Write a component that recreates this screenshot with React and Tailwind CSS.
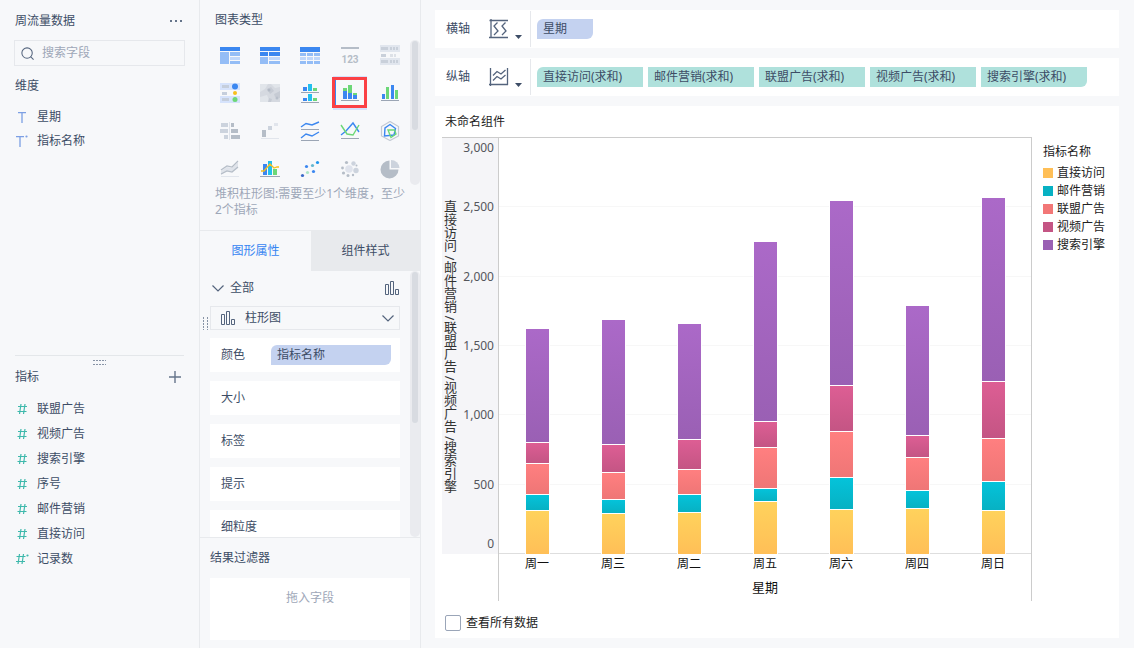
import React, { useState } from 'react';
import clsx from 'clsx';

const dimensions = [
  { name: "星期", calculated: false },
  { name: "指标名称", calculated: true },
];

const measures = [
  { name: "联盟广告", calculated: false },
  { name: "视频广告", calculated: false },
  { name: "搜索引擎", calculated: false },
  { name: "序号", calculated: false },
  { name: "邮件营销", calculated: false },
  { name: "直接访问", calculated: false },
  { name: "记录数", calculated: true },
];

const series = [
  { name: "直接访问", swatch: "bg-[#ffbf57]", fill: "bg-linear-to-b from-[#ffd25c] to-[#ffbf57]" },
  { name: "邮件营销", swatch: "bg-[#07b1c3]", fill: "bg-linear-to-b from-[#04c3da] to-[#07b1c3]" },
  { name: "联盟广告", swatch: "bg-[#f27777]", fill: "bg-linear-to-b from-[#ff7f80] to-[#ef7676]" },
  { name: "视频广告", swatch: "bg-[#c45584]", fill: "bg-linear-to-b from-[#dd5e94] to-[#c45584]" },
  { name: "搜索引擎", swatch: "bg-[#9a60b4]", fill: "bg-linear-to-b from-[#ab69c8] to-[#9a60b4]" },
];

// values are in the same order as series
const days = [
  { label: "周一", values: [315, 120, 220, 152, 823] },
  { label: "周三", values: [297, 101, 191, 201, 905] },
  { label: "周二", values: [302, 130, 180, 215, 838] },
  { label: "周五", values: [382, 96, 293, 187, 1298] },
  { label: "周六", values: [324, 230, 331, 331, 1336] },
  { label: "周四", values: [331, 129, 240, 156, 938] },
  { label: "周日", values: [316, 209, 309, 413, 1325] },
];

const MAX = 3000;
const ticks = ["3,000", "2,500", "2,000", "1,500", "1,000", "500", "0"];

const chartTypes = [
  {
    name: "分组表",
    icon: (
      <>
        <path fill="#3b87f0" d="M0 2h20v4H0z" />
        <path fill="#94bdf6" d="M0 7h9v12H0zM10 7h10v4H10zM10 16h10v3H10z" />
        <path fill="#c0d7fa" d="M10 12h10v3H10z" />
      </>
    ),
  },
  {
    name: "交叉表",
    icon: (
      <>
        <path fill="#3b87f0" d="M0 2h20v4H0zM0 7h8v4H0zM9 7h11v4H9z" />
        <path fill="#94bdf6" d="M0 12h8v7H0zM9 16h11v3H9z" />
        <path fill="#c0d7fa" d="M9 12h11v3H9z" />
      </>
    ),
  },
  {
    name: "明细表",
    icon: (
      <>
        <path fill="#3b87f0" d="M0 2h20v5H0z" />
        <path fill="#94bdf6" d="M0 8h6v3H0zM7 8h6v3H7zM14 8h6v3h-6zM0 16h6v3H0zM7 16h6v3H7zM14 16h6v3h-6z" />
        <path fill="#c0d7fa" d="M0 12h6v3H0zM7 12h6v3H7zM14 12h6v3h-6z" />
      </>
    ),
  },
  {
    name: "KPI指标卡",
    icon: (
      <>
        <path fill="#b5bdc7" d="M1 2h18v2H1z" />
        <text
          x="10"
          y="18"
          textAnchor="middle"
          fill="#b5bdc7"
          className="font-['Roboto',sans-serif] text-[10px] font-bold"
        >
          123
        </text>
      </>
    ),
  },
  {
    name: "颜色表格",
    icon: (
      <>
        <path fill="#e1e6ee" d="M0 0h20v7H0zM0 13h20v7H0z" />
        <path fill="#c9d0da" d="M1 2h7v3H1zM1 9h5v3H1zM1 15h7v3H1zM10 2h2v3h-2zM13 2h2v3h-2zM16 2h2v3h-2zM10 15h2v3h-2zM13 15h2v3h-2zM16 15h2v3h-2z" />
        <path fill="#dde1e7" d="M10 9h3v3h-3zM14 9h2v3h-2z" />
      </>
    ),
  },
  {
    name: "散点图",
    icon: (
      <>
        <path fill="#d6e3fc" d="M0 0h20v7H0zM0 13h20v7H0z" />
        <path fill="#c5cedc" d="M2 2h7v3H2zM2 9h5v3H2zM2 15h7v3H2z" />
        <circle cx="15" cy="3.500" r="3" fill="#3b87f0" />
        <circle cx="15" cy="10" r="2" fill="#f7bf1e" />
        <circle cx="15" cy="16.500" r="2.500" fill="#6cd777" />
      </>
    ),
  },
  {
    name: "热力区域图",
    icon: (
      <>
        <path fill="#d5d9e0" d="M0 1h20v18H0z" />
        <path fill="#e1e5ea" d="M0 1h8l-3 5-5 3zM11 1h9v3l-5 1zM0 14l7-2 3 7H0z" />
        <path fill="#c6cbd4" d="M7 6l4-2 3 4-4 3zM14 11l6-3v7l-5-1zM9 15l3 1-1 3H8z" />
        <circle cx="9" cy="7" r="1.500" fill="#b3bac5" />
        <circle cx="17" cy="15" r="1.500" fill="#b8bfca" />
      </>
    ),
  },
  {
    name: "多系列柱形图",
    icon: (
      <>
        <path fill="#3b87f0" d="M3 4h4v4H3zM3 15h4v3H3z" />
        <path fill="#22bfee" d="M8 1h4v7H8zM8 11h4v7H8z" />
        <path fill="#6cd777" d="M13 5h4v3h-4zM13 15h4v3h-4z" />
        <path fill="#9ba5b4" d="M1 9h18v1H1zM1 19h18v1H1z" />
      </>
    ),
  },
  {
    name: "堆积柱形图",
    selected: true,
    icon: (
      <>
        <path fill="#6cd777" d="M3 5h4v3H3zM8 2h4v8H8zM13 10h4v2h-4z" />
        <path fill="#3b87f0" d="M3 8h4v8H3zM8 10h4v6H8zM13 12h4v4h-4z" />
        <path fill="#9ba5b4" d="M1 17h18v1H1z" />
      </>
    ),
  },
  {
    name: "对比柱形图",
    icon: (
      <>
        <path fill="#3b87f0" d="M2 11h3v5H2zM11 2h3v14h-3z" />
        <path fill="#6cd777" d="M6 4h3v12H6zM15 7h3v9h-3z" />
        <path fill="#9ba5b4" d="M1 17h18v1H1z" />
      </>
    ),
  },
  {
    name: "对比条形图",
    icon: (
      <>
        <path fill="#ccd3dd" d="M1 2h7v4H1zM0 8h8v4H0zM4 14h4v4H4z" />
        <path fill="#b5bdc7" d="M11 2h3v4h-3zM11 8h7v4h-7zM11 14h9v4h-9z" />
        <path fill="#dfe3ea" d="M9 1h1v18H9z" />
      </>
    ),
  },
  {
    name: "瀑布图",
    icon: (
      <>
        <path fill="#b5bdc7" d="M2 9h4v7H2z" />
        <path fill="#ccd3dd" d="M8 5h4v4H8z" />
        <path fill="#e1e5ec" d="M14 2h4v3h-4zM1 17h18v1H1z" />
      </>
    ),
  },
  {
    name: "多系列折线图",
    icon: (
      <>
        <path fill="none" stroke="#3b87f0" strokeWidth="1.400" d="M1 6l5-3.500 6 1.500 7-3M1 17l5-4 6 2 7-4" />
        <path fill="#9ba5b4" d="M1 8h18v1H1zM1 19h18v1H1z" />
      </>
    ),
  },
  {
    name: "范围折线图",
    icon: (
      <>
        <path fill="none" stroke="#3b87f0" strokeWidth="1.400" d="M1 14l5-4 7-8 6 9" />
        <path fill="none" stroke="#6cd777" strokeWidth="1.400" d="M1 4l6 9 6 1 6-10" />
        <path fill="#9ba5b4" d="M1 17h18v1H1z" />
      </>
    ),
  },
  {
    name: "雷达图",
    icon: (
      <g fill="none">
        <path stroke="#c3c9d3" strokeWidth="1.200" d="M10 .5l8.500 5v9.500L10 19.500 1.500 15V5.500z" />
        <path stroke="#3b87f0" strokeWidth="1.400" d="M10 3.500l5.500 4-1.500 6.500-9.500 1 .5-8z" />
        <path stroke="#6cd777" strokeWidth="1.400" d="M8 9h6.500l1.500 4-5 3.500z" />
      </g>
    ),
  },
  {
    name: "面积图",
    icon: (
      <>
        <path fill="#dfe3ea" d="M1 12l6-4 5 1 6-6v6l-6 4-5-1-6 4z" />
        <path fill="none" stroke="#b5bdc7" strokeWidth="1.200" d="M1 11l6-4 5 1 6-6M1 15l6-3 5 1 6-5" />
        <path fill="#e1e5ec" d="M1 17h18v1H1z" />
      </>
    ),
  },
  {
    name: "组合图",
    icon: (
      <>
        <path fill="#3b87f0" d="M3 5h4v11H3z" />
        <path fill="#22bfee" d="M8 2h4v14H8z" />
        <path fill="#6cd777" d="M13 10h4v6h-4z" />
        <path fill="none" stroke="#f7bf1e" strokeWidth="1.300" d="M1 12h3l6-7 4 4 3-1 2 0" />
        <path fill="#9ba5b4" d="M0 17h20v1H0z" />
      </>
    ),
  },
  {
    name: "聚合散点图",
    icon: (
      <>
        <circle cx="2.500" cy="16.500" r="1.600" fill="#3a69c9" />
        <circle cx="6.500" cy="7.500" r="1.600" fill="#3b87f0" />
        <circle cx="7.500" cy="13.500" r="1.600" fill="#abe5c5" />
        <circle cx="12.500" cy="6.500" r="1.600" fill="#64b7d0" />
        <circle cx="13.500" cy="12.500" r="1.600" fill="#3b87f0" />
        <circle cx="17.500" cy="3.500" r="1.600" fill="#1e96ee" />
      </>
    ),
  },
  {
    name: "聚合气泡图",
    icon: (
      <>
        <circle cx="9" cy="10" r="3.800" fill="#dfe3ec" />
        <circle cx="13.500" cy="4.500" r="2.200" fill="#ccd3dd" />
        <circle cx="16" cy="11.500" r="2.700" fill="#ccd3dd" />
        <g fill="#b5bdc7">
          <circle cx="6.500" cy="3.500" r="1.600" />
          <circle cx="2.500" cy="9" r="1.400" />
          <circle cx="3.500" cy="14" r="1.600" />
          <circle cx="8" cy="16.500" r="1.500" />
          <circle cx="13" cy="16" r="1.200" />
          <circle cx="16.500" cy="6.500" r="1" />
        </g>
      </>
    ),
  },
  {
    name: "饼图",
    icon: (
      <>
        <path fill="#b5bdc7" d="M9.500 1.500v9h9a9 9 0 1 1-9-9z" />
        <path fill="#ccd3dd" d="M11 1a8.500 8.500 0 0 1 8.500 8H11z" />
      </>
    ),
  },
];

const Grip = ({ className }) => (
  <svg width="13" height="5" viewBox="0 0 13 5" className={className} aria-hidden="true">
    <path stroke="#8793a5" strokeWidth="1" strokeDasharray="2 1" d="M0 .5h13M0 4.500h13" />
  </svg>
);

const ColumnIcon = () => (
  <svg width="16" height="16" viewBox="0 0 16 16" fill="none" stroke="#54647d" aria-hidden="true">
    <path d="M1.500 4.500h3v10h-3zM6.500 1.500h3v13h-3zM11.500 9.500h3v5h-3z" />
  </svg>
);

const ChevronIcon = () => (
  <svg width="12" height="12" viewBox="0 0 12 12" fill="none" stroke="#54647d" strokeWidth="1.200" aria-hidden="true">
    <path d="M.5 3.500L6 9l5.500-5.500" />
  </svg>
);

const TextFieldIcon = ({ calculated }) => (
  <svg width="14" height="14" viewBox="0 0 14 14" aria-hidden="true">
    <path fill="none" stroke="#7c9fe4" strokeWidth="1.300" d={calculated ? "M1 2.600h8M5 2.600V13" : "M3 2.600h8M7 2.600V13"} />
    {calculated && <circle cx="11.500" cy="2.500" r="1.100" fill="#7c9fe4" />}
  </svg>
);

const NumberFieldIcon = ({ calculated }) => (
  <svg width="14" height="14" viewBox="0 0 14 14" aria-hidden="true">
    <g fill="none" stroke="#3fb9ac" transform={calculated ? "translate(-1.500 0)" : undefined}>
      <path strokeWidth="1.200" d="M3 4.500h9M2.500 9.500h9" />
      <path strokeWidth="1.200" d="M6 2L4.500 12M10 2L8.500 12" />
    </g>
    {calculated && <circle cx="12.500" cy="3.500" r="1.100" fill="#3fb9ac" />}
  </svg>
);

const Scrollbar = ({ thumb }) => (
  <div className="w-[10px] shrink-0 rounded-full bg-[#eaebef] px-[2px] pt-[1px]">
    <div className={clsx("rounded-full bg-[#d8dbe1]", thumb)} />
  </div>
);

const FieldsPanel = () => (
  <aside className="flex w-[200px] shrink-0 flex-col border-r border-[#e8eaed] px-[15px]">
    <div className="flex h-[55%] shrink-0 flex-col border-b border-[#e4e7ea]">
      <div className="flex h-10 items-center justify-between pt-px pr-[2px]">
        <h2>周流量数据</h2>
        <button type="button" aria-label="更多">
          <svg width="12" height="4" viewBox="0 0 12 4" fill="#65748a">
            <path d="M0 1h2v2H0zM5 1h2v2H5zM10 1h2v2h-2z" />
          </svg>
        </button>
      </div>
      <label className="-mx-px flex h-[26px] shrink-0 items-center gap-2 border border-[#e6e8ec] px-[6px]">
        <svg width="15" height="15" viewBox="0 0 15 15" fill="none" stroke="#54647d" strokeWidth="1.200">
          <circle cx="7" cy="7" r="6" />
          <path d="M11 11l3.500 3.500" />
        </svg>
        <input
          type="text"
          aria-label="搜索字段"
          placeholder="搜索字段"
          className="w-full bg-transparent placeholder-[#9ea7b8] focus:outline-none"
        />
      </label>
      <h3 className="flex h-[39px] items-center">维度</h3>
      <ul>
        {dimensions.map((f) => (
          <li key={f.name} className="flex h-6 items-center gap-2">
            <TextFieldIcon calculated={f.calculated} />
            {f.name}
          </li>
        ))}
      </ul>
    </div>
    <Grip className="mt-1 shrink-0 self-center" />
    <div className="mb-[7px] flex h-6 items-center justify-between pr-[3px]">
      <h3>指标</h3>
      <button type="button" aria-label="添加指标">
        <svg width="12" height="12" viewBox="0 0 12 12" stroke="#65748a" strokeWidth="1.400">
          <path d="M6 0v12M0 6h12" />
        </svg>
      </button>
    </div>
    <ul>
      {measures.map((f) => (
        <li key={f.name} className="flex h-[25px] items-center gap-2">
          <NumberFieldIcon calculated={f.calculated} />
          {f.name}
        </li>
      ))}
    </ul>
  </aside>
);

const ChartPanel = () => {
  const [tab, setTab] = useState("图形属性");

  return (
    <section className="flex w-[221px] shrink-0 flex-col border-r border-[#e8eaed]">
      <h2 className="flex h-10 shrink-0 items-center pl-[15px]">图表类型</h2>
      <div className="flex h-[145px] shrink-0 justify-between">
        <div className="grid grid-cols-5 content-start gap-x-5 gap-y-[18px] pt-[5px] pl-5">
          {chartTypes.map((type) => (
            <button key={type.name} type="button" aria-label={type.name} className="relative size-5">
              {type.selected && (
                <>
                  <span className="absolute -inset-[7px] bg-[#d5e2fb]" />
                  <span className="absolute -inset-[5px] border border-[#3b87f0] bg-[#f7f8fa]" />
                  <span className="absolute -top-[6px] -right-[7px] -bottom-[5px] -left-2 border-3 border-[#fb4145]" />
                </>
              )}
              <svg width="20" height="20" viewBox="0 0 20 20" className="relative">
                {type.icon}
              </svg>
            </button>
          ))}
        </div>
        <Scrollbar thumb="h-[89px]" />
      </div>
      <p className="h-[45px] shrink-0 pt-px pr-[10px] pl-[15px] leading-4 text-[#9ea7b8]">
        堆积柱形图:需要至少1个维度，至少2个指标
      </p>

      <div className="grid h-[41px] shrink-0 grid-cols-[111px_1fr] border-t border-[#e8eaed]">
        {["图形属性", "组件样式"].map((name) => (
          <button
            key={name}
            type="button"
            onClick={() => setTab(name)}
            className={tab === name ? "text-[#3685f2]" : "bg-[#e8eaed]"}
          >
            {name}
          </button>
        ))}
      </div>

      <div className="flex min-h-0 flex-1">
        <div className="flex flex-1 flex-col overflow-hidden pr-[10px]">
          <div className="flex h-[34px] shrink-0 items-center gap-[6px] pl-3">
            <ChevronIcon />
            <span className="flex-1">全部</span>
            <ColumnIcon />
          </div>
          <div className="flex items-center gap-[2px] pl-[3px]">
            <svg width="5" height="13" viewBox="0 0 5 13" className="mt-3" aria-hidden="true">
              <path stroke="#8793a5" strokeDasharray="2 1" d="M.5 0v13M4.500 0v13" />
            </svg>
            <div className="relative flex-1">
              <select
                aria-label="图形类型"
                className="block h-6 w-full appearance-none border border-[#e6e8ec] bg-transparent pl-[34px] focus:outline-none"
              >
                <option>柱形图</option>
                <option>点</option>
                <option>线</option>
              </select>
              <span className="pointer-events-none absolute inset-y-0 left-[10px] flex items-center">
                <ColumnIcon />
              </span>
              <span className="pointer-events-none absolute inset-y-0 right-[6px] flex items-center">
                <ChevronIcon />
              </span>
            </div>
          </div>
          <div className="mt-2 flex flex-col gap-[9px] pl-[10px]">
            <div className="flex h-[34px] shrink-0 items-center justify-between bg-white pr-[9px] pl-[11px]">
              颜色
              <span className="h-5 w-[120px] rounded-tl-md rounded-br-md bg-[#c4d2f0] pl-[6px] leading-5">
                指标名称
              </span>
            </div>
            {["大小", "标签", "提示", "细粒度"].map((name) => (
              <div key={name} className="flex h-[34px] shrink-0 items-center bg-white pl-[11px]">
                {name}
              </div>
            ))}
          </div>
        </div>
        <Scrollbar thumb="h-[151px]" />
      </div>

      <div className="shrink-0 border-t border-[#e8eaed] px-[10px] pb-2">
        <h3 className="flex h-10 items-center">结果过滤器</h3>
        <div className="h-[62px] bg-white pt-[10px] text-center leading-5 text-[#9ea7b8]">拖入字段</div>
      </div>
    </section>
  );
};

const AxisRow = ({ name, icon, children }) => (
  <div className="flex h-[38px] shrink-0 items-center bg-white">
    <span className="w-[54px] pl-[11px]">{name}</span>
    <button type="button" aria-label={name + "类型"} className="flex items-end gap-[6px]">
      {icon}
      <svg width="7" height="4" viewBox="0 0 7 4" fill="#3d4d66">
        <path d="M0 0h7L3.500 4z" />
      </svg>
    </button>
    <div className="ml-2 flex h-9 flex-1 items-center gap-[5px] border-l border-[#e6e8ec] pl-[6px] leading-5">
      {children}
    </div>
  </div>
);

const StackedChart = () => (
  <div className="flex flex-1 flex-col">
    <div className="flex flex-1 border-t border-[#ccc] text-[#54565c]">
      <div className="flex w-14 bg-[#f5f5f8]">
        <div className="flex w-4 items-center justify-center text-[#333]">
          <span className="text-[13px] leading-4 whitespace-pre [writing-mode:vertical-rl]">
            {series.map((s) => s.name).join(" /")}
          </span>
        </div>
        <div className="flex flex-1 flex-col pr-1 text-right leading-5">
          {ticks.map((t, i) => (
            <div
              key={t}
              className={clsx(
                "flex min-h-0 basis-0 justify-end",
                i === 0 && "grow items-start",
                i === ticks.length - 1 && "grow items-end",
                i > 0 && i < ticks.length - 1 && "grow-2 items-center"
              )}
            >
              {t}
            </div>
          ))}
        </div>
      </div>
      <div className="relative flex-1 border-x border-[#ccc]">
        <div className="absolute inset-0 flex flex-col">
          {ticks.slice(1).map((t) => (
            <div key={t} className="flex-1 border-b border-[#f7f7f7] last:border-[#dedede]" />
          ))}
        </div>
        <div className="absolute inset-0 grid grid-cols-7">
          {days.map((day) => (
            <div key={day.label} className="flex flex-col-reverse items-center">
              {day.values.map((value, i) => (
                <div
                  key={series[i].name}
                  className="w-[25px] border border-b-0 border-white"
                  style={{ height: (value / MAX) * 100 + "%" }}
                >
                  <div className={clsx("h-full", series[i].fill)} />
                </div>
              ))}
            </div>
          ))}
        </div>
      </div>
    </div>
    <div className="ml-14 h-[47px] border-x border-[#ccc] text-center text-[#111]">
      <div className="grid grid-cols-7 leading-5">
        {days.map((day) => (
          <span key={day.label}>{day.label}</span>
        ))}
      </div>
      <div className="pt-[3px] text-[13px] leading-5">星期</div>
    </div>
  </div>
);

const App = () => {
  const [showAll, setShowAll] = useState(false);

  return (
    <div className="flex h-screen min-h-[560px] bg-[#f7f8fa] font-['Noto_Sans','Noto_Sans_CJK_SC',sans-serif] text-xs text-[#3d4d66]">
      <FieldsPanel />
      <ChartPanel />

      <main className="flex min-w-0 flex-1 flex-col gap-[10px] py-[10px] pr-[15px] pl-[14px]">
        <AxisRow
          name="横轴"
          icon={
            <svg width="20" height="20" viewBox="0 0 20 20" fill="none" stroke="#54647d" strokeWidth="1.300">
              <path d="M2 0v19M.5 1.500H19M0 18.500h19" />
              <path d="M8.500 3.500L5 7l4 5-4 4M16.500 3.500L13 7l4 5-4 4" />
            </svg>
          }
        >
          <span className="h-5 w-14 rounded-tl-md rounded-br-md bg-[#c4d2f0] pl-[6px]">星期</span>
        </AxisRow>

        <AxisRow
          name="纵轴"
          icon={
            <svg width="20" height="20" viewBox="0 0 20 20" fill="none" stroke="#54647d" strokeWidth="1.300">
              <path d="M1.500 1v18M18.500 1v17M0 17.500h19" />
              <path d="M4 8.500l4-4L12 7l4.500-4M4 13.500l4-4 4 2.500 4.500-4" />
            </svg>
          }
        >
          {series.map((s) => (
            <span
              key={s.name}
              className="h-5 w-[106px] bg-[#afe1dc] pl-[6px] first:rounded-tl-md last:rounded-br-md"
            >
              {s.name}(求和)
            </span>
          ))}
        </AxisRow>

        <section className="flex min-h-0 flex-1 flex-col bg-white text-[#222]">
          <h2 className="flex h-[31px] shrink-0 items-center pl-[10px]">未命名组件</h2>
          <div className="flex min-h-0 flex-1 pl-[7px]">
            <StackedChart />
            <div className="w-[87px] shrink-0 pt-[6px] pl-[11px]">
              <h3 className="mb-[3px] leading-[18px]">指标名称</h3>
              <ul className="leading-[18px]">
                {series.map((s) => (
                  <li key={s.name} className="flex items-center gap-1">
                    <span className={clsx("size-[10px]", s.swatch)} />
                    {s.name}
                  </li>
                ))}
              </ul>
            </div>
          </div>
          <label className="flex h-[37px] shrink-0 items-center gap-[5px] pt-[6px] pl-[10px]">
            <input
              type="checkbox"
              checked={showAll}
              onChange={(e) => setShowAll(e.target.checked)}
              className="size-4 appearance-none rounded-xs border border-[#9aa5b8] bg-white checked:bg-[#3685f2]"
            />
            查看所有数据
          </label>
        </section>
      </main>
    </div>
  );
};

export default App;
